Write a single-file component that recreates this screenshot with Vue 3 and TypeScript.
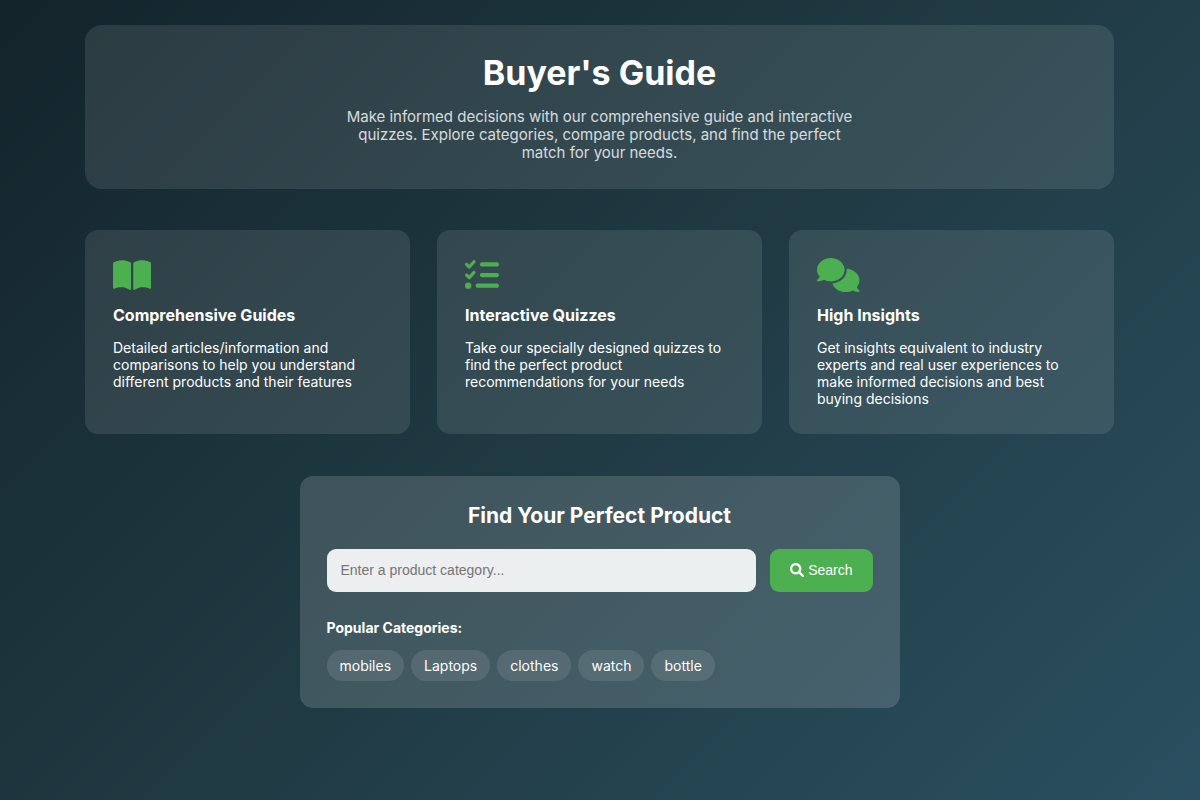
<script setup lang="ts">
import { ref } from 'vue'

interface Feature {
  title: string
  text: string
  width: number
  path: string
}

const features: Feature[] = [
  {
    title: 'Comprehensive Guides',
    text: 'Detailed articles/information and comparisons to help you understand different products and their features',
    width: 576,
    path: 'M144.3 32.04C106.9 31.29 63.7 41.44 18.6 61.29c-11.42 5.026-18.6 16.67-18.6 29.15l0 357.6c0 11.55 11.99 19.55 22.45 14.65c126.3-59.14 219.8 11 223.8 14.01C249.1 478.9 252.5 480 256 480c12.4 0 16-11.38 16-15.98V80.04c0-5.203-2.531-10.08-6.781-13.08C263.3 65.58 216.7 33.35 144.3 32.04zM557.4 61.29c-45.11-19.79-88.48-29.61-125.7-29.26c-72.44 1.312-118.1 33.55-120.9 34.92C306.5 69.96 304 74.83 304 80.04v383.1C304 468.4 307.5 480 320 480c3.484 0 6.938-1.125 9.781-3.328c3.925-3.018 97.44-73.16 223.8-14c10.46 4.896 22.45-3.105 22.45-14.65l.0001-357.6C575.1 77.97 568.8 66.31 557.4 61.29z',
  },
  {
    title: 'Interactive Quizzes',
    text: 'Take our specially designed quizzes to find the perfect product recommendations for your needs',
    width: 512,
    path: 'M152.1 38.2c9.9 8.9 10.7 24 1.8 33.9l-72 80c-4.4 4.9-10.6 7.8-17.2 7.9s-12.9-2.4-17.6-7L7 113C-2.3 103.6-2.3 88.4 7 79s24.6-9.4 33.9 0l22.1 22.1 55.1-61.2c8.9-9.9 24-10.7 33.9-1.8zm0 160c9.9 8.9 10.7 24 1.8 33.9l-72 80c-4.4 4.9-10.6 7.8-17.2 7.9s-12.9-2.4-17.6-7L7 273c-9.4-9.4-9.4-24.6 0-33.9s24.6-9.4 33.9 0l22.1 22.1 55.1-61.2c8.9-9.9 24-10.7 33.9-1.8zM224 96c0-17.7 14.3-32 32-32H480c17.7 0 32 14.3 32 32s-14.3 32-32 32H256c-17.7 0-32-14.3-32-32zm0 160c0-17.7 14.3-32 32-32H480c17.7 0 32 14.3 32 32s-14.3 32-32 32H256c-17.7 0-32-14.3-32-32zM160 416c0-17.7 14.3-32 32-32H480c17.7 0 32 14.3 32 32s-14.3 32-32 32H192c-17.7 0-32-14.3-32-32zM48 368a48 48 0 1 1 0 96 48 48 0 1 1 0-96z',
  },
  {
    title: 'High Insights',
    text: 'Get insights equivalent to industry experts and real user experiences to make informed decisions and best buying decisions',
    width: 640,
    path: 'M208 352c114.9 0 208-78.8 208-176S322.9 0 208 0S0 78.8 0 176c0 38.6 14.7 74.3 39.6 103.4c-3.5 9.4-8.7 17.7-14.2 24.7c-4.8 6.2-9.7 11-13.3 14.3c-1.8 1.6-3.3 2.9-4.3 3.7c-.5 .4-.9 .7-1.1 .8l-.2 .2C1 327.2-1.4 334.4 .8 340.9S9.1 352 16 352c21.8 0 43.8-5.6 62.1-12.5c9.2-3.5 17.8-7.4 25.2-11.4C134.1 343.3 169.8 352 208 352zM448 176c0 112.3-99.1 196.9-216.5 207C255.8 457.4 336.4 512 432 512c38.2 0 73.9-8.7 104.7-23.9c7.5 4 16 7.9 25.2 11.4c18.3 6.9 40.3 12.5 62.1 12.5c6.9 0 13.1-4.5 15.2-11.1c2.1-6.6-.2-13.8-5.8-17.9l-.2-.2c-.2-.2-.6-.4-1.1-.8c-1-.8-2.5-2-4.3-3.7c-3.6-3.3-8.5-8.1-13.3-14.3c-5.5-7-10.7-15.4-14.2-24.7c24.9-29 39.6-64.7 39.6-103.4c0-92.8-84.9-168.9-192.6-175.5c.4 5.1 .6 10.3 .6 15.5z',
  },
]

const categories: string[] = ['mobiles', 'Laptops', 'clothes', 'watch', 'bottle']
const query = ref('')
</script>

<template>
  <div class="page">
    <header class="hero">
      <h1>Buyer's Guide</h1>
      <p>
        Make informed decisions with our comprehensive guide and interactive quizzes. Explore
        categories, compare products, and find the perfect match for your needs.
      </p>
    </header>

    <section class="features">
      <article v-for="feature in features" :key="feature.title" class="card">
        <svg class="card-icon" :viewBox="`0 0 ${feature.width} 512`" aria-hidden="true">
          <path :d="feature.path" />
        </svg>
        <h2>{{ feature.title }}</h2>
        <p>{{ feature.text }}</p>
      </article>
    </section>

    <section class="finder">
      <h2>Find Your Perfect Product</h2>
      <form class="search" @submit.prevent>
        <input
          v-model="query"
          type="text"
          placeholder="Enter a product category..."
          aria-label="Product category"
        />
        <button type="submit">
          <svg viewBox="0 0 512 512" aria-hidden="true">
            <path
              d="M500.3 443.7l-119.7-119.7c27.22-40.41 40.65-90.9 33.46-144.7C401.8 87.79 326.8 13.32 235.2 1.723C99.01-15.51-15.51 99.01 1.724 235.2c11.6 91.64 86.08 166.7 177.6 178.9c53.8 7.189 104.3-6.236 144.7-33.46l119.7 119.7c15.62 15.62 40.95 15.62 56.57 0C515.9 484.7 515.9 459.3 500.3 443.7zM79.1 208c0-70.58 57.42-128 128-128s128 57.42 128 128c0 70.58-57.42 128-128 128S79.1 278.6 79.1 208z"
            />
          </svg>
          Search
        </button>
      </form>
      <h3>Popular Categories:</h3>
      <div class="tags">
        <button v-for="name in categories" :key="name" type="button" @click="query = name">
          {{ name }}
        </button>
      </div>
    </section>
  </div>
</template>

<style>
body {
  margin: 0;
}
</style>

<style scoped>
.page {
  box-sizing: border-box;
  min-height: 100vh;
  padding: 25px 86px 92px 85px;
  background: linear-gradient(135deg, #13242a, #203a43 50%, #2a4f60);
  color: #fff;
  font-family: Inter, "Liberation Sans", sans-serif;
}

h1,
h2,
h3,
p {
  margin: 0;
}

.hero {
  padding: 27px;
  border-radius: 17px;
  background: rgba(255, 255, 255, 0.1);
  text-align: center;
}

.hero h1 {
  margin-bottom: 14px;
  font-size: 34px;
  line-height: 42px;
  font-weight: 700;
}

.hero p {
  max-width: 514px;
  margin: 0 auto;
  font-size: 15px;
  line-height: 18px;
  opacity: 0.8;
}

.features {
  display: grid;
  grid-template-columns: repeat(auto-fit, minmax(240px, 1fr));
  gap: 27px;
  margin: 41px 0 42px;
}

.card {
  padding: 28px 28px 27px;
  border-radius: 13px;
  background: rgba(255, 255, 255, 0.1);
}

.card-icon {
  display: block;
  height: 34px;
  margin-bottom: 13px;
  fill: #4caf50;
}

.card h2 {
  margin-bottom: 14px;
  font-size: 16px;
  line-height: 20px;
}

.card p {
  font-size: 14px;
  line-height: 17px;
}

.finder {
  box-sizing: border-box;
  max-width: 600px;
  margin: 0 auto;
  padding: 27px;
  border-radius: 13px;
  background: rgba(255, 255, 255, 0.15);
}

.finder h2 {
  margin-bottom: 20px;
  font-size: 21px;
  line-height: 26px;
  text-align: center;
}

.search {
  display: flex;
  gap: 14px;
  margin-bottom: 27px;
}

.search input,
.search button {
  box-sizing: border-box;
  height: 43px;
  border: 0;
  border-radius: 9px;
  font-family: "Liberation Sans", Arial, sans-serif;
  font-size: 14px;
}

.search input {
  flex: 1;
  min-width: 0;
  padding: 0 14px 2px;
  background: rgba(255, 255, 255, 0.9);
  color: #333;
}

.search input::placeholder {
  color: #757575;
}

.search button {
  display: flex;
  align-items: center;
  gap: 4px;
  padding: 0 20px 2px;
  background: #4caf50;
  color: #fff;
  cursor: pointer;
}

.search button svg {
  width: 14px;
  height: 14px;
  fill: currentColor;
}

.finder h3 {
  margin-bottom: 13px;
  font-size: 14px;
  line-height: 18px;
}

.tags {
  display: flex;
  flex-wrap: wrap;
  gap: 7px;
}

.tags button {
  padding: 7px 13px;
  border: 0;
  border-radius: 17px;
  background: rgba(255, 255, 255, 0.1);
  color: inherit;
  font-family: inherit;
  font-size: 14px;
  line-height: 17px;
  cursor: pointer;
}
</style>
